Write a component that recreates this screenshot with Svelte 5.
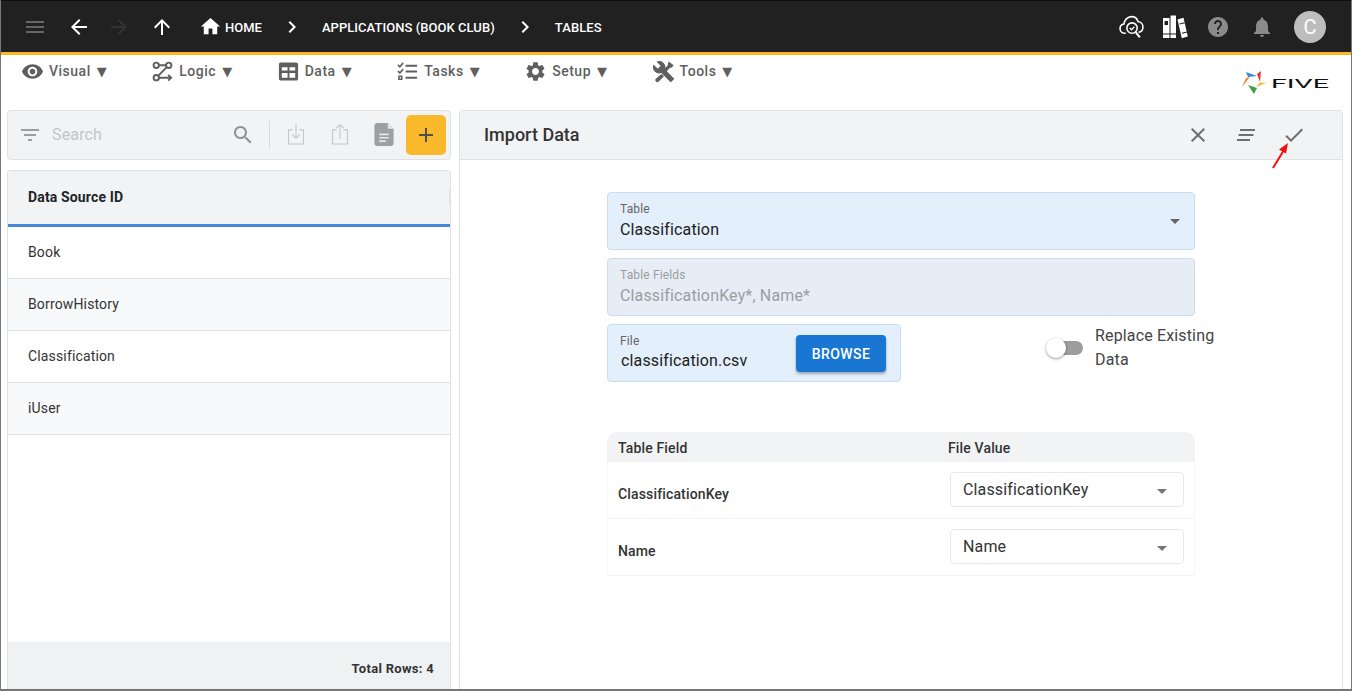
<script>
  const p = {
    menu: 'M3 18h18v-2H3v2zm0-5h18v-2H3v2zm0-7v2h18V6H3z',
    back: 'M20 11H7.83l5.59-5.59L12 4l-8 8 8 8 1.41-1.41L7.83 13H20v-2z',
    fwd: 'M12 4l-1.41 1.41L16.17 11H4v2h12.17l-5.58 5.59L12 20l8-8z',
    up: 'M4 12l1.41 1.41L11 7.83V20h2V7.83l5.58 5.59L20 12l-8-8-8 8z',
    home: 'M10 20v-6h4v6h5v-8h3L12 3 2 12h3v8z',
    chev: 'M10 6L8.59 7.41 13.17 12l-4.58 4.59L10 18l6-6z',
    help: 'M12 2C6.48 2 2 6.48 2 12s4.48 10 10 10 10-4.48 10-10S17.52 2 12 2zm1 17h-2v-2h2v2zm2.07-7.75l-.9.92C13.45 12.9 13 13.5 13 15h-2v-.5c0-1.1.45-2.1 1.17-2.83l1.24-1.26c.37-.36.59-.86.59-1.41 0-1.1-.9-2-2-2s-2 .9-2 2H8c0-2.21 1.79-4 4-4s4 1.79 4 4c0 .88-.36 1.68-.93 2.25z',
    bell: 'M12 22c1.1 0 2-.9 2-2h-4c0 1.1.89 2 2 2zm6-6v-5c0-3.07-1.64-5.64-4.5-6.32V4c0-.83-.67-1.5-1.5-1.5s-1.5.67-1.5 1.5v.68C7.63 5.36 6 7.92 6 11v5l-2 2v1h16v-1l-2-2z',
    eye: 'M12 4.5C7 4.5 2.73 7.61 1 12c1.73 4.39 6 7.5 11 7.5s9.27-3.11 11-7.5c-1.73-4.39-6-7.5-11-7.5zM12 17c-2.76 0-5-2.24-5-5s2.24-5 5-5 5 2.24 5 5-2.24 5-5 5zm0-8c-1.66 0-3 1.34-3 3s1.34 3 3 3 3-1.34 3-3-1.34-3-3-3z',
    gear: 'M19.14 12.94c.04-.3.06-.61.06-.94 0-.32-.02-.64-.07-.94l2.03-1.58c.18-.14.23-.41.12-.61l-1.92-3.32c-.12-.22-.37-.29-.59-.22l-2.39.96c-.5-.38-1.03-.7-1.62-.94l-.36-2.54c-.04-.24-.24-.41-.48-.41h-3.84c-.24 0-.43.17-.47.41l-.36 2.54c-.59.24-1.13.57-1.62.94l-2.39-.96c-.22-.08-.47 0-.59.22L2.74 8.87c-.12.21-.08.47.12.61l2.03 1.58c-.05.3-.09.63-.09.94s.02.64.07.94l-2.03 1.58c-.18.14-.23.41-.12.61l1.92 3.32c.12.22.37.29.59.22l2.39-.96c.5.38 1.03.7 1.62.94l.36 2.54c.05.24.24.41.48.41h3.84c.24 0 .44-.17.47-.41l.36-2.54c.59-.24 1.13-.56 1.62-.94l2.39.96c.22.08.47 0 .59-.22l1.92-3.32c.12-.22.07-.47-.12-.61l-2.01-1.58zM12 15.6c-1.98 0-3.6-1.62-3.6-3.6s1.62-3.6 3.6-3.6 3.6 1.62 3.6 3.6-1.62 3.6-3.6 3.6z',
    close: 'M19 6.41L17.59 5 12 10.59 6.41 5 5 6.41 10.59 12 5 17.59 6.41 19 12 13.41 17.59 19 19 17.59 13.41 12z',
    check: 'M9 16.17L4.83 12l-1.42 1.41L9 19 21 7l-1.41-1.41z',
    search: 'M15.5 14h-.79l-.28-.27C15.41 12.59 16 11.11 16 9.5 16 5.91 13.09 3 9.5 3S3 5.91 3 9.5 5.91 16 9.5 16c1.61 0 3.09-.59 4.23-1.57l.27.28v.79l5 4.99L20.49 19l-4.99-5zm-6 0C7.01 14 5 11.99 5 9.5S7.01 5 9.5 5 14 7.01 14 9.5 11.99 14 9.5 14z',
    filter: 'M10 18h4v-2h-4v2zM3 6v2h18V6H3zm3 7h12v-2H6v2z',
    add: 'M19 13h-6v6h-2v-6H5v-2h6V5h2v6h6v2z',
    drop: 'M7 10l5 5 5-5z',
    tools: 'M22.7 19l-9.1-9.1c.9-2.3.4-5-1.5-6.9-2-2-5-2.4-7.4-1.3L9 6 6 9 1.6 4.7C.4 7.1.9 10.1 2.9 12.1c1.9 1.9 4.6 2.4 6.9 1.5l9.1 9.1c.4.4 1 .4 1.4 0l2.3-2.3c.5-.4.5-1.1.1-1.4z',
    table: 'M20 2.500H4C2.900 2.500 2 3.400 2 4.500v15c0 1.100.9 2 2 2h16c1.100 0 2-.9 2-2v-15c0-1.100-.9-2-2-2zM11 18.500H5v-5h6v5zm0-7.500H5V7.500h6V11zm8 7.500h-6v-5h6v5zm0-7.500h-6V7.500h6V11z'
  };
  const nav = [
    { icon: 'eye', label: 'Visual' },
    { icon: 'logic', label: 'Logic' },
    { icon: 'table', label: 'Data' },
    { icon: 'tasks', label: 'Tasks' },
    { icon: 'gear', label: 'Setup' },
    { icon: 'tools', label: 'Tools' }
  ];
  const rows = ['Book', 'BorrowHistory', 'Classification', 'iUser'];
  const fields = ['ClassificationKey', 'Name'];
</script>

<div class="app">
  <header class="top">
    <svg class="ic menu" viewBox="0 0 24 24"><path d={p.menu} /></svg>
    <svg class="ic back" viewBox="0 0 24 24"><path d={p.back} /></svg>
    <svg class="ic fwd" viewBox="0 0 24 24"><path d={p.fwd} /></svg>
    <svg class="ic up" viewBox="0 0 24 24"><path d={p.up} /></svg>
    <svg class="ic home" viewBox="0 0 24 24"><path d={p.home} /></svg>
    <span class="crumb c1">HOME</span>
    <svg class="ic chev" viewBox="0 0 24 24"><path d={p.chev} /></svg>
    <span class="crumb c2">APPLICATIONS (BOOK CLUB)</span>
    <svg class="ic chev" viewBox="0 0 24 24"><path d={p.chev} /></svg>
    <span class="crumb c3">TABLES</span>
    <div class="top-right">
      <svg class="cloud" viewBox="0 0 24 24" fill="none" stroke="#fff" stroke-width="1.500">
        <path d="M6.500 18.500H5.500C3 18.500 1 16.500 1 13.900c0-2.200 1.600-4 3.700-4.300C5.300 6 8 2.500 12 2.500c3.200 0 5.400 2 6.200 4.700 2.700.3 4.800 2.500 4.800 5.200 0 2.700-1.800 4.800-4.300 5.100" />
        <circle cx="12.500" cy="13.500" r="5" />
        <path d="M10.300 13.500l1.700 1.700 2.800-3" stroke-width="1.300" />
        <path d="M16 17.500l4 5" stroke-width="1.900" />
      </svg>
      <svg class="books" viewBox="0 0 26 26" fill="#fff">
        <path d="M1 4h6.500v20H1zM8.500 1.500h5.500v22.500H8.500z" />
        <path d="M15.500 5.500l6-1.700 4.300 18.700-6 1.700z" />
        <path d="M2.500 7h3.500v4H2.500z" fill="#212121" />
        <path d="M1 19.500h13v1H1zM17.500 9.500l5-1.300.3 1-5 1.300zM19.800 18.800l5-1.300.3 1-5 1.300z" fill="#212121" />
      </svg>
      <svg class="ic help" viewBox="0 0 24 24"><path d={p.help} /></svg>
      <svg class="ic bell" viewBox="0 0 24 24"><path d={p.bell} /></svg>
      <div class="avatar">C</div>
    </div>
  </header>

  <div class="navrow">
    <nav class="nav">
      {#each nav as n}
        <div class="nav-item">
          {#if n.icon === 'logic'}
            <svg viewBox="0 0 24 24" fill="none" stroke="#5f5f5f" stroke-width="2">
              <circle cx="5.500" cy="5.500" r="2.800" />
              <circle cx="18.500" cy="5.500" r="2.800" />
              <circle cx="5.500" cy="18.500" r="2.800" />
              <path d="M8.300 5.500h7.400M16.500 7.500L7.500 16.500M8.300 18.500H21M18 15.500l3 3-3 3" />
            </svg>
          {:else if n.icon === 'tasks'}
            <svg viewBox="0 0 24 24" fill="none" stroke="#5f5f5f" stroke-width="2">
              <path d="M10 6h12M10 12h12M10 18.500h12" stroke-width="2.200" />
              <path d="M2 5l2 2 3.500-4M2 11.500l2 2 3.500-4" stroke-width="1.700" />
              <path d="M3 17h3v3H3z" stroke-width="1.600" />
            </svg>
          {:else if n.icon === 'tools'}
            <svg viewBox="0 0 24 24" fill="#5f5f5f">
              <path d={p.tools} />
              <path d="M17.500 1.500l5 4-1.700 2.300-2 .2-5.500 6-2.500-2.500 5.700-6 .2-2zM10 14.500l2.500 2.500-5.500 5.500c-.8.8-2 .8-2.800 0l-.2-.2c-.8-.8-.8-2 0-2.800z" />
            </svg>
          {:else}
            <svg viewBox="0 0 24 24" fill="#5f5f5f"><path d={p[n.icon]} /></svg>
          {/if}
          <span class="nav-label">{n.label}</span>
          <span class="tri">▼</span>
        </div>
      {/each}
    </nav>
    <div class="logo">
      <svg viewBox="0 0 100 36" width="100" height="36">
        <path d="M13 7l11 4-9 1z" fill="#3d85d8" />
        <path d="M24 9l4-3-1 11z" fill="#e53935" />
        <path d="M23 22l10-4-6-.5z" fill="#f9b92a" />
        <path d="M15 20l9 3-3 6z" fill="#43a047" />
        <path d="M9 22l8-10-4 1z" fill="#f58634" />
        <text x="38" y="23" class="logo-text" textLength="58" lengthAdjust="spacingAndGlyphs">FIVE</text>
      </svg>
    </div>
  </div>

  <main class="content">
    <section class="left">
      <div class="toolbar">
        <svg class="ic filter" viewBox="0 0 24 24"><path d={p.filter} /></svg>
        <span class="search-ph">Search</span>
        <svg class="ic lens" viewBox="0 0 24 24"><path d={p.search} /></svg>
        <span class="divider"></span>
        <svg class="tool-ic" viewBox="0 0 24 28" fill="none" stroke="#c3c7cb" stroke-width="1.300">
          <path d="M8 9H3v17h18V9h-5" /><path d="M12 2v17M7.500 14.500L12 19l4.500-4.500" />
        </svg>
        <svg class="tool-ic" viewBox="0 0 24 28" fill="none" stroke="#c3c7cb" stroke-width="1.300">
          <path d="M8 9H3v17h18V9h-5" /><path d="M12 20V2.500M7.500 7L12 2.500 16.500 7" />
        </svg>
        <svg class="doc" viewBox="0 0 20 24">
          <path d="M3 0h11l6 6v15c0 1.700-1.300 3-3 3H3c-1.700 0-3-1.300-3-3V3c0-1.700 1.300-3 3-3z" fill="#9ba0a4" />
          <path d="M14 0l6 6h-6z" fill="#e4e6e8" />
          <path d="M5 11h10v1.800H5zM5 14.500h10v1.800H5zM5 18h7v1.800H5z" fill="#e4e6e8" />
        </svg>
        <button class="add"><svg viewBox="0 0 24 24"><path d={p.add} /></svg></button>
      </div>
      <div class="grid">
        <div class="grid-head">Data Source ID</div>
        <div class="grid-body">
          {#each rows as r}
            <div class="grid-row"><span>{r}</span></div>
          {/each}
        </div>
        <div class="grid-foot">Total Rows: 4</div>
      </div>
    </section>

    <section class="right">
      <div class="right-head">
        <h1>Import Data</h1>
        <svg class="ic x" viewBox="0 0 24 24"><path d={p.close} /></svg>
        <svg class="lines" viewBox="0 0 18 12"><path d="M3 0h15v2H3zM1.500 5h15v2h-15zM0 10h13v2H0z" /></svg>
        <svg class="ic chk" viewBox="0 0 24 24"><path d={p.check} /></svg>
        <svg class="red-arrow" viewBox="0 0 20 28" fill="none">
          <path d="M2 26L13 8" stroke="#f01010" stroke-width="2" />
          <path d="M17 1l-9 6.500 7 4z" fill="#f01010" />
        </svg>
      </div>
      <div class="form">
        <div class="field">
          <span class="lab">Table</span>
          <span class="val">Classification</span>
          <svg class="ddl" viewBox="0 0 24 24"><path d={p.drop} /></svg>
        </div>
        <div class="field disabled">
          <span class="lab">Table Fields</span>
          <span class="val">ClassificationKey*, Name*</span>
        </div>
        <div class="file-row">
          <div class="field file">
            <div class="file-text">
              <span class="lab">File</span>
              <span class="val">classification.csv</span>
            </div>
            <button class="browse">BROWSE</button>
          </div>
          <div class="switch-wrap">
            <span class="switch"><span class="thumb"></span></span>
            <span class="switch-label">Replace Existing Data</span>
          </div>
        </div>
        <div class="map">
          <div class="map-head"><span class="c-a">Table Field</span><span class="c-b">File Value</span></div>
          {#each fields as f}
            <div class="map-row">
              <span class="c-a map-name">{f}</span>
              <div class="select">
                <span>{f}</span>
                <svg class="ddl small" viewBox="0 0 24 24"><path d={p.drop} /></svg>
              </div>
            </div>
          {/each}
        </div>
      </div>
    </section>
  </main>
</div>

<style>
  :global(body) {
    margin: 0;
    font-family: Roboto, "Liberation Sans", sans-serif;
    background: #fff;
    overflow: hidden;
  }
  .app {
    width: 1352px;
    height: 691px;
    box-sizing: border-box;
    border-left: 1px solid #777;
    border-right: 1px solid #777;
    border-bottom: 2px solid #777;
    display: flex;
    flex-direction: column;
    overflow: hidden;
    letter-spacing: 0.15px;
  }
  .top {
    height: 55px;
    box-sizing: border-box;
    margin: 0 -1px;
    background: #212121;
    border-top: 1px solid #0c0c0c;
    border-bottom: 3px solid #fbb824;
    display: flex;
    align-items: center;
    color: #fff;
    flex: none;
  }
  .ic { width: 24px; height: 24px; flex: none; }
  .menu { fill: #666; margin-left: 23px; }
  .back { fill: #fff; margin-left: 20px; }
  .fwd { fill: #333; margin-left: 16px; }
  .up { fill: #fff; margin-left: 19px; }
  .home { fill: #fff; margin-left: 25px; width: 23px; height: 23px; }
  .chev { fill: #fff; margin-left: -1px; }
  .crumb { font-size: 13px; font-weight: 500; white-space: nowrap; letter-spacing: 0; padding-top: 1px; }
  .c1 { margin-left: 3px; margin-right: 19px; }
  .c2 { margin-left: 18px; margin-right: 19px; letter-spacing: 0.05px; }
  .c3 { margin-left: 18px; letter-spacing: 0.1px; }
  .top-right { margin-left: auto; display: flex; align-items: center; }
  .cloud { width: 25px; height: 25px; margin-right: 18px; margin-left: -5px; }
  .books { width: 26px; height: 26px; margin-right: 18px; }
  .help { fill: #8a8a8a; margin-right: 20px; }
  .bell { fill: #8a8a8a; margin-right: 20px; }
  .avatar {
    width: 32px;
    height: 32px;
    border-radius: 50%;
    background: #bdbdbd;
    color: #fff;
    font-size: 20px;
    display: flex;
    align-items: center;
    justify-content: center;
    margin-right: 26px;
  }
  .navrow {
    height: 55px;
    flex: none;
    display: flex;
    justify-content: space-between;
    align-items: flex-start;
  }
  .nav {
    display: flex;
    gap: 44.600px;
    padding-left: 20px;
    padding-top: 5px;
  }
  .nav-item { display: flex; align-items: center; height: 22px; color: #5f5f5f; font-size: 14px; font-weight: 500; letter-spacing: 0.5px; }
  .nav-item svg { width: 23px; height: 23px; margin-right: 5px; }
  .tri { margin-left: 6px; font-size: 13px; font-family: "DejaVu Sans", sans-serif; letter-spacing: 0; }
  .logo { margin-top: 10px; margin-right: 18px; width: 100px; height: 36px; }
  .logo-text { font-family: Roboto, sans-serif; font-size: 13.500px; font-weight: 400; fill: #111; letter-spacing: 0; }
  .content {
    flex: 1;
    min-height: 0;
    display: flex;
    gap: 8px;
    padding-left: 6px;
    padding-right: 8px;
  }
  .left { width: 444px; flex: none; display: flex; flex-direction: column; gap: 10px; }
  .toolbar {
    height: 50px;
    box-sizing: border-box;
    flex: none;
    background: #f1f3f5;
    border: 1px solid #dfe1e3;
    border-radius: 4px;
    display: flex;
    align-items: center;
  }
  .filter { fill: #9a9ea2; margin-left: 10px; }
  .search-ph { color: #c2c5c8; font-size: 16px; margin-left: 10px; flex: 1; padding-bottom: 2px; }
  .lens { fill: #8f9397; margin-right: 14px; margin-left: -1px; }
  .divider { width: 1px; height: 28px; background: #d8dadc; margin-right: 16px; }
  .tool-ic { width: 20px; height: 28px; margin-right: 24px; margin-bottom: 2px; }
  .doc { width: 20px; height: 23px; margin-right: 12px; margin-bottom: 1px; margin-left: 0; }
  .add {
    width: 40px;
    height: 40px;
    padding: 8px;
    border: none;
    border-radius: 5px;
    background: #f9b92a;
    margin-right: 4px;
    display: flex;
  }
  .add svg { fill: #4f4f4f; width: 24px; height: 24px; }
  .grid {
    flex: 1;
    min-height: 0;
    display: flex;
    flex-direction: column;
    border: 1px solid #dfe1e3;
    border-bottom: none;
    border-radius: 4px 4px 0 0;
  }
  .grid-head {
    flex: none;
    box-sizing: border-box;
    height: 56px;
    background: #f1f3f5;
    border-bottom: 3px solid #4a86d8;
    display: flex;
    align-items: center;
    font-size: 14px;
    font-weight: 700;
    color: #212529;
    padding: 0 0 2px 20px;
    position: relative;
  }
  .grid-head::after {
    content: "";
    position: absolute;
    right: 0;
    top: 19px;
    width: 1px;
    height: 14px;
    background: #dfe1e3;
  }
  .grid-body { flex: 1; min-height: 0; }
  .grid-row {
    height: 52px;
    box-sizing: border-box;
    border-bottom: 1px solid #dfe1e3;
    display: flex;
    align-items: center;
    padding: 0 0 2px 20px;
    font-size: 14px;
    color: #333;
  }
  .grid-row:nth-child(even) { background: #f8f9fa; }
  .grid-foot {
    height: 47px;
    flex: none;
    box-sizing: border-box;
    background: #eef2f3;
    display: flex;
    align-items: center;
    justify-content: flex-end;
    padding-right: 16px;
    padding-top: 6px;
    font-size: 13px;
    font-weight: 700;
    letter-spacing: 0.3px;
    color: #333;
  }
  .right {
    flex: 1;
    min-width: 0;
    display: flex;
    flex-direction: column;
    border: 1px solid #dfe1e3;
    border-bottom: none;
    border-radius: 4px 4px 0 0;
  }
  .right-head {
    height: 49px;
    flex: none;
    box-sizing: border-box;
    background: #f1f3f5;
    border-bottom: 1px solid #dfe1e3;
    display: flex;
    align-items: center;
    position: relative;
    padding-left: 24px;
  }
  h1 { margin: 0; font-size: 18px; font-weight: 500; color: #333; flex: 1; padding-bottom: 2px; letter-spacing: 0; }
  .x { fill: #6f6f6f; margin-right: 27px; }
  .lines { width: 18px; height: 12px; fill: #6f6f6f; margin-right: 27px; }
  .chk { fill: #6f6f6f; margin-right: 36px; }
  .red-arrow { position: absolute; left: 811px; top: 31px; width: 20px; height: 28px; }
  .form { width: 588px; margin: 32px auto 0; display: flex; flex-direction: column; gap: 8px; }
  .field {
    height: 58px;
    box-sizing: border-box;
    background: #e3effb;
    border: 1px solid #c9dcf0;
    border-radius: 4px;
    padding: 9px 12px 0;
    display: flex;
    flex-direction: column;
    position: relative;
  }
  .lab { font-size: 12px; line-height: 14px; color: #666; }
  .val { font-size: 16px; line-height: 24px; margin-top: 2px; color: #212121; }
  .disabled { background: #e6edf5; }
  .disabled .lab, .disabled .val { color: #9a9ea3; }
  .ddl { position: absolute; right: 7px; top: 16px; width: 24px; height: 24px; fill: #666; }
  .file-row { display: flex; align-items: center; }
  .file { width: 294px; flex: none; flex-direction: row; align-items: flex-start; justify-content: space-between; padding-right: 14px; }
  .file-text { display: flex; flex-direction: column; }
  .file-text .val { margin-left: 1px; margin-top: 1px; }
  .browse {
    width: 90px;
    height: 37px;
    margin-top: 1px;
    background: #1976d2;
    color: #fff;
    border: none;
    border-radius: 4px;
    font-family: inherit;
    font-size: 14px;
    font-weight: 500;
    letter-spacing: 0.4px;
    box-shadow: 0 2px 3px rgba(0,0,0,.3);
  }
  .switch-wrap { display: flex; align-items: center; margin-left: 147px; margin-bottom: 10px; }
  .switch { width: 34px; height: 14px; border-radius: 7px; background: #9e9e9e; position: relative; flex: none; margin-left: 1px; }
  .thumb { position: absolute; left: -3px; top: -3px; width: 20px; height: 20px; border-radius: 50%; background: #fff; box-shadow: 0 1px 3px rgba(0,0,0,.4); }
  .switch-label { font-size: 16px; line-height: 24px; color: #444; margin-left: 12px; width: 125px; flex: none; }
  .map { margin-top: 42px; }
  .map-head {
    height: 30px;
    box-sizing: border-box;
    padding-top: 1px;
    background: #f1f3f5;
    border-radius: 10px 10px 0 0;
    display: flex;
    align-items: center;
    font-size: 14px;
    font-weight: 500;
    color: #333;
  }
  .c-a { width: 341px; padding-left: 11px; box-sizing: border-box; flex: none; }
  .map-row {
    height: 57px;
    box-sizing: border-box;
    border-bottom: 1px solid #f2f2f2;
    display: flex;
    align-items: flex-start;
    border-left: 1px solid #f8f8f8;
    border-right: 1px solid #f8f8f8;
  }
  .map-name { font-size: 14px; font-weight: 500; color: #333; padding-top: 24px; line-height: 17px; margin-left: -1px; }
  .select {
    width: 234px;
    height: 35px;
    box-sizing: border-box;
    margin-top: 10px;
    margin-left: 2px;
    border: 1px solid #e8e8e8;
    border-radius: 4px;
    padding-left: 12px;
    display: flex;
    align-items: center;
    font-size: 16px;
    color: #333;
    position: relative;
  }
  .ddl.small { right: 9px; top: 6px; fill: #777; }
</style>
